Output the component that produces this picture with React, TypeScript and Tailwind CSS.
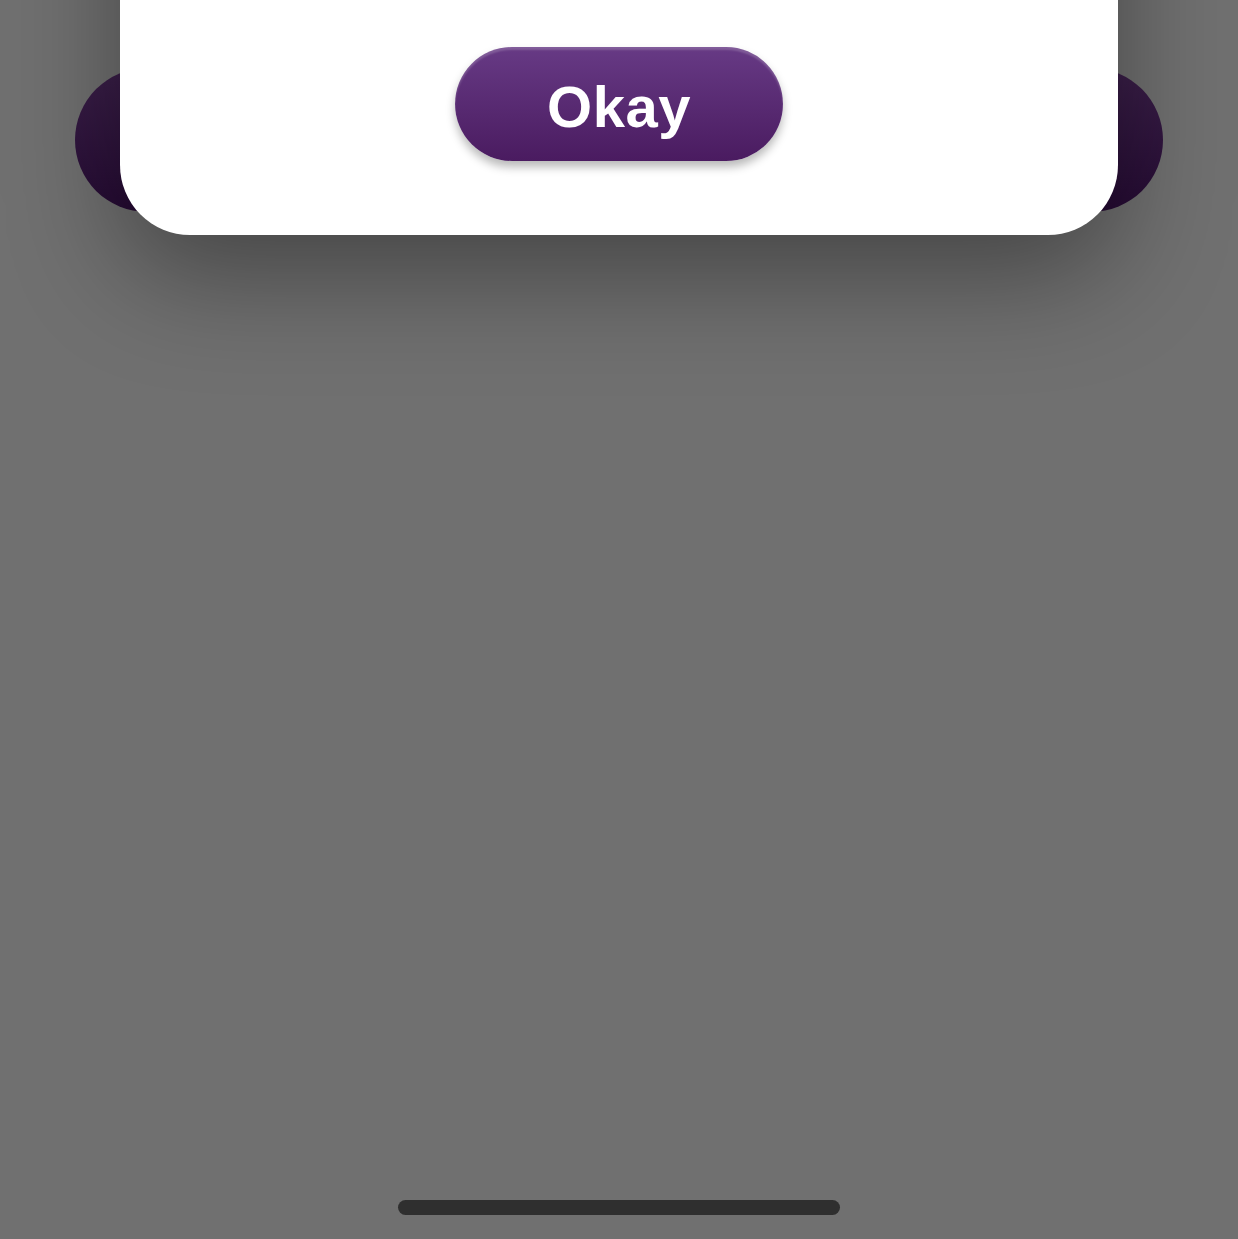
import React from "react";

export default function App() {
  return (
    <div className="relative w-[1238px] h-[1239px] overflow-hidden bg-[#707070]" style={{ fontFamily: '"Liberation Sans", Arial, sans-serif' }}>
      {/* dimmed background content */}
      <div className="pt-[68px] px-[75px]">
        <div className="h-[144px] rounded-full bg-gradient-to-b from-[#3b1f49] to-[#260b34]" />
      </div>

      {/* modal card */}
      <div className="absolute left-[120px] top-[-300px] w-[998px] h-[535px] bg-white rounded-b-[70px] shadow-[0_40px_110px_rgba(0,0,0,0.38)] flex flex-col justify-end items-center pb-[74px]">
        <button className="w-[328px] h-[114px] rounded-full bg-gradient-to-b from-[#673a85] to-[#4a1b60] shadow-[0_6px_10px_rgba(0,0,0,0.28),inset_0_3px_2px_rgba(255,255,255,0.18)] text-white font-bold text-[58px] leading-none flex items-center justify-center pt-[6px] tracking-[0.5px]">
          Okay
        </button>
      </div>

      {/* home indicator */}
      <div className="absolute left-[398px] top-[1200px] w-[442px] h-[15px] rounded-full bg-[#2f2f2f]" />
    </div>
  );
}
